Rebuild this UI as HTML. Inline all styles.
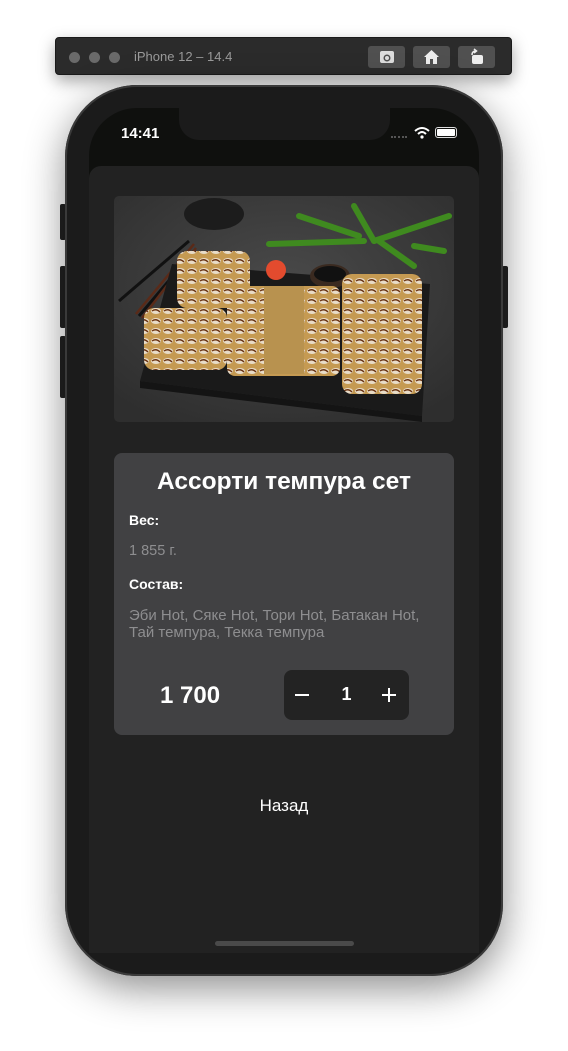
<!DOCTYPE html>
<html><head><meta charset="utf-8"><style>
*{margin:0;padding:0;box-sizing:border-box}
body{width:568px;height:1051px;background:#fff;position:relative;overflow:hidden;font-family:"Liberation Sans",Arial,sans-serif}
.a{position:absolute}
.tb{left:55px;top:37px;width:457px;height:38px;background:#2b2b2b;border-radius:4px;box-shadow:0 6px 16px rgba(0,0,0,.35);border:1px solid #1a1a1a}
.dot{top:14px;width:11px;height:11px;border-radius:50%;background:#6a6a6a}
.btn{top:8px;width:37px;height:22px;background:#505050;border-radius:3px}
.phone{left:65px;top:85px;width:438px;height:891px;border-radius:72px;background:#1b1b1b;box-shadow:0 12px 40px rgba(0,0,0,.45),inset 0 0 0 2px #3a3a3a}
.side{background:#222;border-radius:2px}
.screen{left:89px;top:108px;width:390px;height:845px;border-radius:48px 48px 0 0;background:#0f100e;overflow:hidden}
.content{left:0;top:58px;width:390px;height:787px;background:#222;border-radius:12px 12px 0 0}
.card{left:114px;top:453px;width:340px;height:282px;background:#414143;border-radius:8px}
</style></head><body>
<div class="a tb">
 <div class="a dot" style="left:13px"></div><div class="a dot" style="left:33px"></div><div class="a dot" style="left:53px"></div>
 <div class="a" style="left:78px;top:11px;font-size:13px;color:#9a9a9a">iPhone 12 – 14.4</div>
 <div class="a btn" style="left:312px"><svg width="37" height="22"><rect x="12" y="5" width="14" height="12" rx="2" fill="#ddd"/><circle cx="19" cy="12" r="3.5" fill="#505050"/><circle cx="19" cy="12" r="2" fill="#ddd"/></svg></div>
 <div class="a btn" style="left:357px"><svg width="37" height="22"><path d="M11 11 L18.5 4 L26 11 L24 11 L24 18 L13 18 L13 11Z" fill="#eee"/><rect x="17" y="13" width="3" height="5" fill="#505050"/></svg></div>
 <div class="a btn" style="left:402px"><svg width="37" height="22"><rect x="14" y="9" width="11" height="9" rx="2" fill="#eee"/><path d="M14 9 Q14 5 18 5 M16 3 L18.5 5 L16 7" stroke="#eee" stroke-width="1.5" fill="none"/></svg></div>
</div>
<div class="a side" style="left:60px;top:204px;width:6px;height:36px"></div>
<div class="a side" style="left:60px;top:266px;width:6px;height:62px"></div>
<div class="a side" style="left:60px;top:336px;width:6px;height:62px"></div>
<div class="a side" style="left:502px;top:266px;width:6px;height:62px"></div>
<div class="a phone"></div>
<div class="a screen">
 <div class="a" style="left:90px;top:0;width:211px;height:32px;background:#1b1b1b;border-radius:0 0 20px 20px"></div>
 <div class="a" style="left:32px;top:17px;font-size:15px;font-weight:bold;color:#fff">14:41</div>
 <div class="a" style="left:302px;top:28px;width:16px;height:2px;border-top:2px dotted #555"></div>
 <svg class="a" style="left:325px;top:18px" width="16" height="13"><path d="M1 5 Q8 -1 15 5" stroke="#fff" stroke-width="2" fill="none"/><path d="M4 8 Q8 4 12 8" stroke="#fff" stroke-width="2" fill="none"/><circle cx="8" cy="11" r="1.6" fill="#fff"/></svg>
 <div class="a" style="left:346px;top:19px;width:22px;height:11px;border:1px solid #ddd;border-radius:3px;padding:1px"><div style="width:100%;height:100%;background:#fff;border-radius:1px"></div></div>
 <div class="a content"></div>
 <div class="a" style="left:126px;top:833px;width:139px;height:5px;border-radius:3px;background:#4a4a4a"></div>
</div>
<svg class="a" style="left:114px;top:196px;border-radius:5px" width="340" height="226">
 <defs><radialGradient id="bg" cx="50%" cy="40%" r="70%"><stop offset="0" stop-color="#4a4a4a"/><stop offset="1" stop-color="#2e2e2e"/></radialGradient>
 <pattern id="r" width="12" height="10" patternUnits="userSpaceOnUse"><rect width="12" height="10" fill="#c59a52"/><ellipse cx="6" cy="5" rx="5" ry="3" fill="#e8dcc8"/><path d="M2 5 Q6 2 10 6" stroke="#6a3210" stroke-width="1.4" fill="none"/></pattern></defs>
 <rect width="340" height="226" fill="url(#bg)"/>
 <ellipse cx="100" cy="18" rx="30" ry="16" fill="#1c1c1c"/>
 <path d="M5 105 L75 45 M25 120 L80 55" stroke="#111" stroke-width="3"/>
 <path d="M22 118 L80 48 M28 122 L82 52" stroke="#5a2a18" stroke-width="2.5"/>
 <g stroke="#3f8a1f" stroke-width="6" stroke-linecap="round"><path d="M155 48 L250 45"/><path d="M185 20 L245 40"/><path d="M240 10 L260 45"/><path d="M260 45 L335 20"/><path d="M300 50 L330 55"/><path d="M265 45 L300 70"/></g>
 <path d="M58 68 L316 88 L308 220 L26 185 Z" fill="#1a1a1a"/>
 <path d="M26 185 L308 220 L308 226 L26 192Z" fill="#141414"/>
 <circle cx="162" cy="74" r="10" fill="#e34b2e"/>
 <ellipse cx="216" cy="80" rx="20" ry="12" fill="#3a2a20"/><ellipse cx="216" cy="78" rx="16" ry="8" fill="#111"/>
 <rect x="63" y="55" width="73" height="57" rx="10" fill="url(#r)"/>
 <rect x="30" y="112" width="83" height="62" rx="10" fill="url(#r)"/>
 <rect x="113" y="90" width="113" height="90" rx="8" fill="url(#r)"/>
 <rect x="150" y="90" width="40" height="88" fill="#b8924f"/>
 <rect x="228" y="78" width="80" height="120" rx="10" fill="url(#r)"/>
</svg>
<div class="a card">
 <div class="a" style="left:0;top:15px;width:340px;text-align:center;font-size:24.5px;font-weight:bold;color:#fff">Ассорти темпура сет</div>
 <div class="a" style="left:15px;top:59px;font-size:14px;font-weight:bold;color:#fff">Вес:</div>
 <div class="a" style="left:15px;top:90px;font-size:14.5px;color:#8e8e90">1 855 г.</div>
 <div class="a" style="left:15px;top:123px;font-size:14px;font-weight:bold;color:#fff">Состав:</div>
 <div class="a" style="left:15px;top:154px;font-size:15px;line-height:17px;color:#8e8e90">Эби Hot, Сяке Hot, Тори Hot, Батакан Hot,<br>Тай темпура, Текка темпура</div>
 <div class="a" style="left:46px;top:229px;font-size:24px;font-weight:bold;color:#fff">1 700</div>
 <div class="a" style="left:170px;top:217px;width:125px;height:50px;background:#232323;border-radius:8px">
  <div class="a" style="left:11px;top:24px;width:14px;height:1.5px;background:#fff"></div>
  <div class="a" style="left:0;top:14px;width:125px;text-align:center;font-size:18px;font-weight:bold;color:#fff">1</div>
  <div class="a" style="left:98px;top:24px;width:14px;height:1.5px;background:#fff"></div>
  <div class="a" style="left:104.3px;top:18px;width:1.5px;height:14px;background:#fff"></div>
 </div>
</div>
<div class="a" style="left:0;top:796px;width:568px;text-align:center;font-size:17px;color:#fff">Назад</div>
</body></html>
